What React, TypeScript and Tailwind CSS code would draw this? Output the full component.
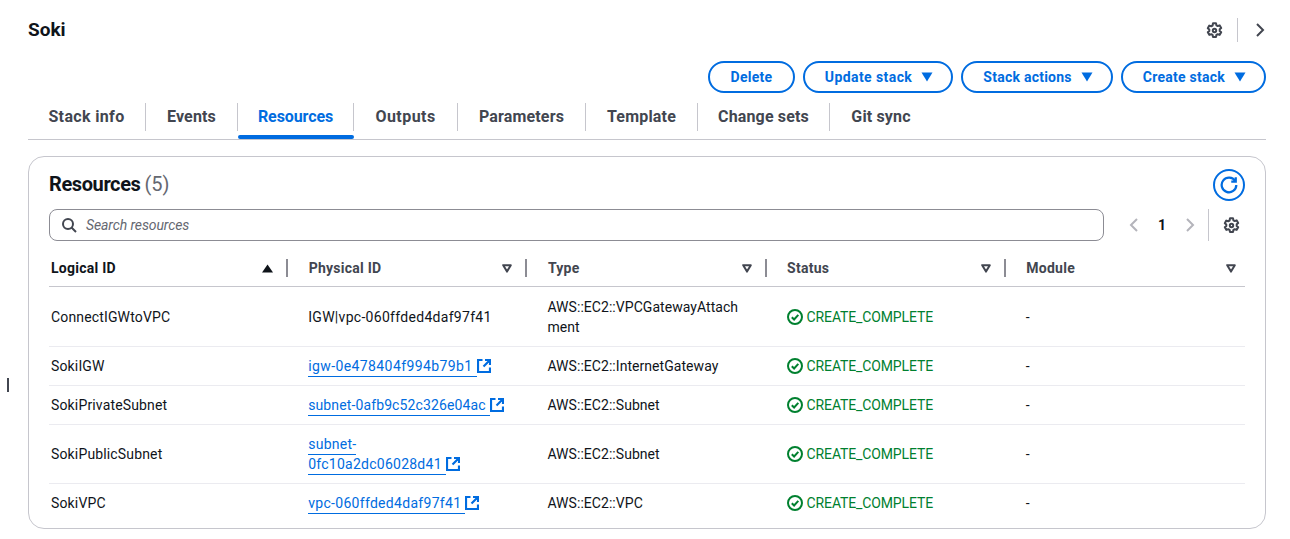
import { Fragment } from "react";

const BLUE = "#006ce0";

const tabs = [
  { label: "Stack info", width: "w-[117px]", track: "tracking-[0.35px]" },
  { label: "Events", width: "w-[91px]", track: "tracking-[0.15px]" },
  { label: "Resources", width: "w-[115px]", track: "tracking-[-0.1px]" },
  { label: "Outputs", width: "w-[103px]", track: "tracking-[0.45px]" },
  { label: "Parameters", width: "w-[127px]", track: "tracking-[0.15px]" },
  { label: "Template", width: "w-[111px]", track: "tracking-[0.2px]" },
  { label: "Change sets", width: "w-[131px]", track: "tracking-[0.15px]" },
  { label: "Git sync", width: "w-[102px]", track: "tracking-[0.15px]" },
];

type Row = { name: string; physical: string[]; link: boolean; type: string[]; track: string };

const rows: Row[] = [
  { name: "ConnectIGWtoVPC", physical: ["IGW|vpc-060ffded4daf97f41"], link: false, type: ["AWS::EC2::VPCGatewayAttach", "ment"], track: "tracking-[0.3px]" },
  { name: "SokiIGW", physical: ["igw-0e478404f994b79b1"], link: true, type: ["AWS::EC2::InternetGateway"], track: "tracking-[0.4px]" },
  { name: "SokiPrivateSubnet", physical: ["subnet-0afb9c52c326e04ac"], link: true, type: ["AWS::EC2::Subnet"], track: "tracking-[0.12px]" },
  { name: "SokiPublicSubnet", physical: ["subnet-", "0fc10a2dc06028d41"], link: true, type: ["AWS::EC2::Subnet"], track: "tracking-[0.25px]" },
  { name: "SokiVPC", physical: ["vpc-060ffded4daf97f41"], link: true, type: ["AWS::EC2::VPC"], track: "tracking-[0.3px]" },
];

const GearIcon = () => (
  <svg width="17" height="17" viewBox="0 0 16 16" fill="none" stroke="#424650" strokeWidth="1.9" strokeLinejoin="round">
    <path d="M6.6 1.2h2.8l.4 1.9 1.3.7 1.8-.6 1.4 2.4-1.4 1.3v1.5l1.4 1.3-1.4 2.4-1.8-.6-1.3.7-.4 1.9H6.6l-.4-1.9-1.3-.7-1.8.6-1.4-2.4 1.4-1.3V7.1L1.7 5.8l1.4-2.4 1.8.6 1.3-.7z" />
    <circle cx="8" cy="8" r="1.6" />
  </svg>
);

const Caret = () => (
  <svg width="12" height="10" viewBox="0 0 12 10" fill={BLUE}>
    <path d="M0.5 0.5h11L6 9.5z" />
  </svg>
);

const SortDown = () => (
  <svg width="10" height="9" viewBox="0 0 10 9" fill="none" stroke="#424650" strokeWidth="2" strokeLinejoin="round">
    <path d="M1.2 1.2h7.6L5 7.6z" />
  </svg>
);

const SortUp = () => (
  <svg width="11" height="9" viewBox="0 0 11 9" fill="#0f141a">
    <path d="M5.5 0.5L11 8.5H0z" />
  </svg>
);

const ExternalIcon = () => (
  <svg width="14" height="14" viewBox="0 0 14 14" fill="none" stroke={BLUE} strokeWidth="2.2" className="shrink-0">
    <path d="M5.5 1H1v12h12V8.5" />
    <path d="M8 1h5v5M13 1L6.5 7.5" />
  </svg>
);

const StatusIcon = () => (
  <svg width="16" height="16" viewBox="0 0 16 16" fill="none" stroke="#00802f" strokeWidth="2" className="shrink-0">
    <circle cx="8" cy="8" r="7" />
    <path d="M4.8 8.2l2.3 2.3 4.2-4.6" />
  </svg>
);

const PillButton = ({ label, caret, className }: { label: string; caret?: boolean; className: string }) => (
  <button className={`h-[32px] flex items-center gap-[9px] rounded-[20px] border-2 border-[#006ce0] text-[#006ce0] text-[14px] font-bold leading-none ${caret ? "pl-[20px] pr-[18px]" : "px-[20.5px]"} ${className}`}>
    {label}
    {caret && <Caret />}
  </button>
);

const headers = ["Logical ID", "Physical ID", "Type", "Status", "Module"];

export default function App() {
  return (
    <div className="w-[1290px] h-[539px] overflow-hidden bg-white relative font-['Roboto',sans-serif] text-[14px] text-[#0f141a]">
      <div className="absolute left-[7px] top-[378px] w-[2px] h-[14px] bg-[#424650]" />

      <div className="ml-[28px] w-[1238px] pt-[18px]">
        <div className="flex items-center justify-between h-[24px]">
          <h1 className="text-[19px] font-bold">Soki</h1>
          <div className="flex items-center">
            <GearIcon />
            <div className="w-px h-[24px] bg-[#c6c6cd] ml-[14px] mr-[16px]" />
            <svg width="12" height="14" viewBox="0 0 12 14" fill="none" stroke="#424650" strokeWidth="2">
              <path d="M3 1l6 6-6 6" />
            </svg>
          </div>
        </div>

        <div className="flex justify-end gap-[8px] mt-[19px]">
          <PillButton label="Delete" className="tracking-[0.25px]" />
          <PillButton label="Update stack" caret className="tracking-[0.42px]" />
          <PillButton label="Stack actions" caret className="tracking-[0.25px]" />
          <PillButton label="Create stack" caret className="tracking-[0.25px]" />
        </div>

        <div className="flex h-[38px] mt-[9px] border-b border-[#c6c6cd] relative">
          {tabs.map((tab, i) => (
            <div key={tab.label} className="relative flex items-start pt-[1px]">
              <div className={`h-[28px] flex items-center justify-center text-[16px] font-bold ${tab.width} ${tab.track} ${tab.label === "Resources" ? "text-[#006ce0]" : "text-[#424650]"}`}>
                {tab.label}
              </div>
              {i < tabs.length - 1 && <div className="w-px h-[28px] bg-[#c6c6cd]" />}
              {tab.label === "Resources" && <div className="absolute left-0 right-0 bottom-[0px] h-[4px] rounded-[2px] bg-[#006ce0]" />}
            </div>
          ))}
        </div>

        <div className="mt-[16px] h-[373px] border border-[#c6c6cd] rounded-[16px] px-[20px] pt-[12px]">
          <div className="flex justify-between items-start h-[32px]">
            <h2 className="text-[20px] font-bold leading-[32px] -mt-[1px]">
              <span className="tracking-[-0.4px]">Resources</span>{" "}
              <span className="font-normal text-[#656871] -ml-[1px]">(5)</span>
            </h2>
            <button className="w-[32px] h-[32px] rounded-full border-2 border-[#006ce0] flex items-center justify-center">
              <svg width="18" height="18" viewBox="0 0 16 16" fill="none" stroke={BLUE} strokeWidth="2">
                <path d="M13.5 4.5A6.5 6.5 0 1 0 14.5 8" />
                <path d="M14 1v4h-4" />
              </svg>
            </button>
          </div>

          <div className="flex items-center mt-[8px]">
            <div className="w-[1055px] h-[32px] border border-[#8c8c94] rounded-[8px] flex items-center pl-[11px] gap-[9px]">
              <svg width="16" height="16" viewBox="0 0 16 16" fill="none" stroke="#424650" strokeWidth="2" className="shrink-0">
                <circle cx="7" cy="7" r="5" />
                <path d="M10.5 10.5L15 15" />
              </svg>
              <span className="italic text-[#656871] tracking-[-0.1px]">Search resources</span>
            </div>
            <div className="flex items-center ml-[25px]">
              <svg width="10" height="14" viewBox="0 0 10 14" fill="none" stroke="#b4b4bb" strokeWidth="2">
                <path d="M8 1L2 7l6 6" />
              </svg>
              <span className="w-[46px] text-center font-bold">1</span>
              <svg width="10" height="14" viewBox="0 0 10 14" fill="none" stroke="#b4b4bb" strokeWidth="2">
                <path d="M2 1l6 6-6 6" />
              </svg>
              <div className="w-px h-[32px] bg-[#c6c6cd] ml-[13px] mr-[14px]" />
              <GearIcon />
            </div>
          </div>

          <div className="grid grid-cols-5 mt-[9px] h-[37px] border-b border-[#c6c6cd]">
            {headers.map((h, i) => (
              <div key={h} className={`flex items-center h-[36px] ${i === 0 ? "pl-[2px]" : "pl-[20.5px]"}`}>
                <span className={`font-bold flex-1 tracking-[0.25px] ${i === 0 ? "text-[#0f141a]" : "text-[#424650]"}`}>{h}</span>
                {i === 0 ? <SortUp /> : <SortDown />}
                {i < 4 ? <div className="w-[2px] h-[18px] bg-[#8c8c94] ml-[13px]" /> : <div className="w-[9px]" />}
              </div>
            ))}
          </div>

          {rows.map((row, i) => (
            <div key={row.name} className={`grid grid-cols-5 items-center leading-[20px] pb-[9px] ${i === 0 ? "pt-[10px]" : "pt-[9px]"} ${i < rows.length - 1 ? "border-b border-[#ebebf0]" : ""}`}>
              <div className="pl-[2px] tracking-[0.15px]">{row.name}</div>
              <div className={`pl-[20px] ${row.track}`}>
                {row.link ? (
                  <div className="text-[#006ce0]">
                    {row.physical.map((part, j) => (
                      <Fragment key={part}>
                        {j === row.physical.length - 1 ? (
                          <div className="flex items-center gap-[4px] h-[20px]">
                            <span className="border-b border-[#006ce0] pr-[4px] -mr-[4px]">{part}</span>
                            <ExternalIcon />
                          </div>
                        ) : (
                          <div className="h-[20px]"><span className="inline-block border-b border-[#006ce0]">{part}</span></div>
                        )}
                      </Fragment>
                    ))}
                  </div>
                ) : (
                  row.physical[0]
                )}
              </div>
              <div className="pl-[20px] tracking-[0.05px]">
                {row.type.map((t) => (
                  <div key={t} className="whitespace-nowrap">{t}</div>
                ))}
              </div>
              <div className="pl-[20px] flex items-center gap-[4px] text-[#00802f] tracking-[-0.13px]">
                <StatusIcon />
                CREATE_COMPLETE
              </div>
              <div className="pl-[20px]">-</div>
            </div>
          ))}
        </div>
      </div>
    </div>
  );
}
